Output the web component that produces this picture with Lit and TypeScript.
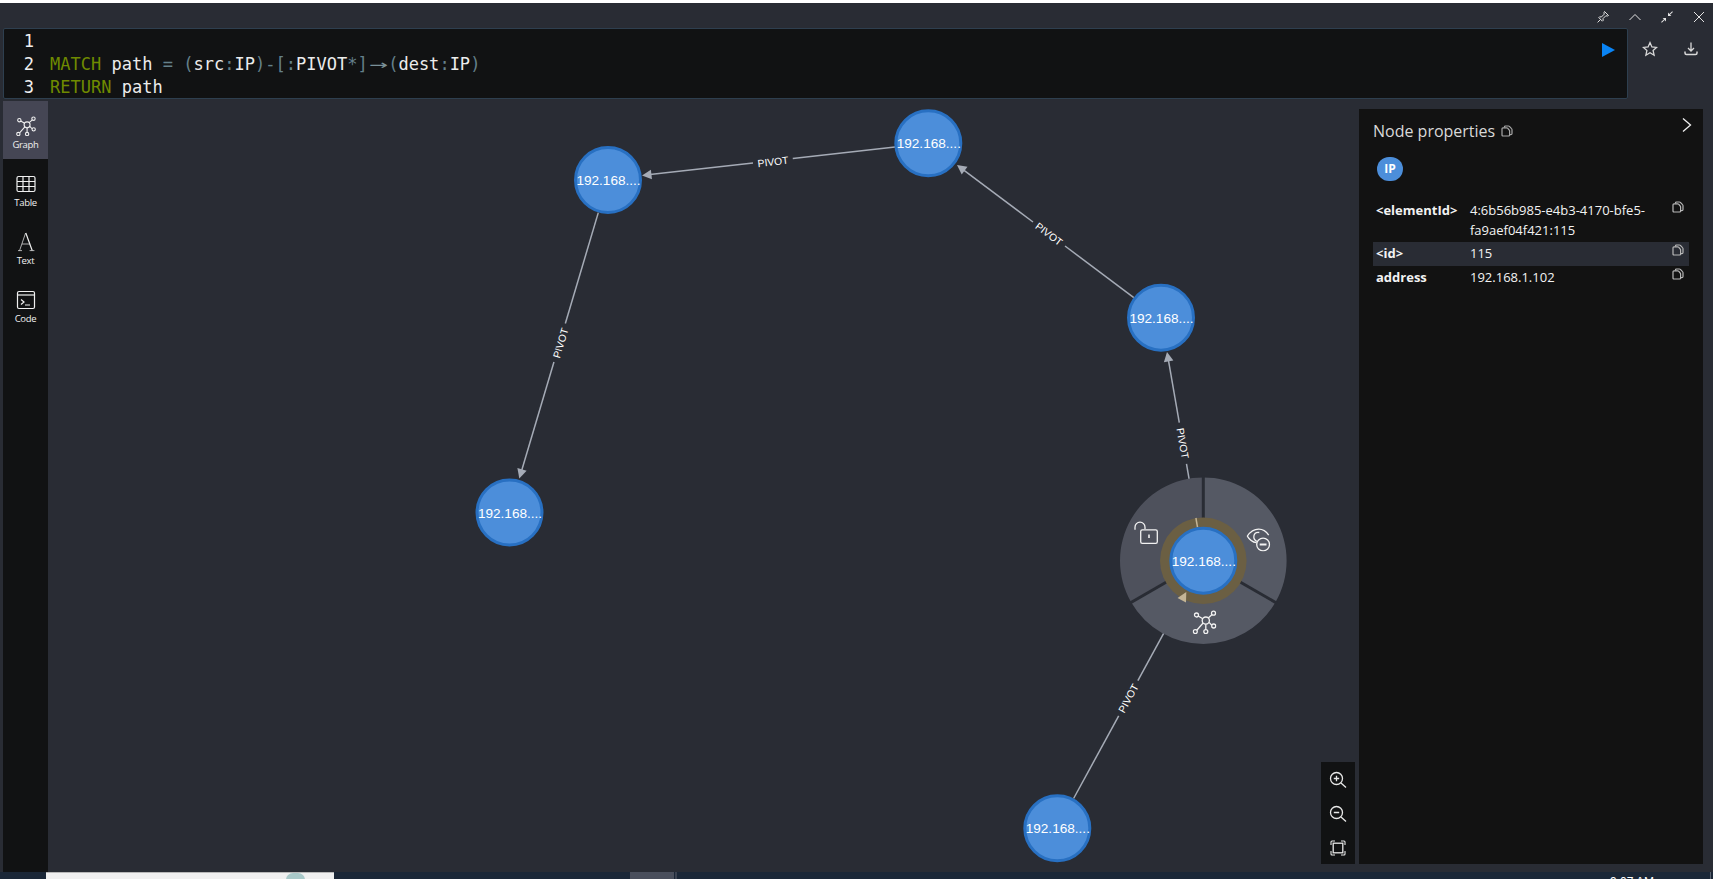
import { LitElement, html, css, svg } from "lit";
import { customElement } from "lit/decorators.js";

type Pt = [number, number];
const BG = "#292c34";
const LINE = "#a5abb6";
const BEIGE = "#c4b596";

interface Node { x: number; y: number; }
const nodes: Node[] = [
  { x: 608, y: 180 },
  { x: 928.3, y: 143.3 },
  { x: 1161, y: 317.7 },
  { x: 509.5, y: 512.5 },
  { x: 1057.3, y: 828.3 },
];
const SEL: Pt = [1203.3, 560.7];

interface Edge { from: Pt; to: Pt; label: Pt; rot: number; gap: number; arrow: boolean; }
const edges: Edge[] = [
  { from: [895, 147], to: [642, 175.5], label: [773, 161.7], rot: -6.5, gap: 20, arrow: true },
  { from: [1133.8, 297.6], to: [957, 165], label: [1049, 234], rot: 36.9, gap: 20, arrow: true },
  { from: [1203.3, 560.7], to: [1167, 352], label: [1182.7, 443.3], rot: 80.1, gap: 21, arrow: true },
  { from: [598.3, 212.6], to: [519.3, 478.5], label: [560.5, 343], rot: -73.4, gap: 20, arrow: true },
  { from: [1073.6, 798.5], to: [1186.3, 591.9], label: [1128.3, 698.3], rot: -61.4, gap: 20, arrow: false },
];

function arrowHead(tip: Pt, ux: number, uy: number, fill: string) {
  const len = 9.5, w = 4.8;
  const bx = tip[0] - ux * len, by = tip[1] - uy * len;
  const pts = `${tip[0]},${tip[1]} ${bx - uy * w},${by + ux * w} ${bx + uy * w},${by - ux * w}`;
  return svg`<polygon points=${pts} fill=${fill}></polygon>`;
}

function edgeView(e: Edge) {
  const dx = e.to[0] - e.from[0], dy = e.to[1] - e.from[1];
  const d = Math.hypot(dx, dy), ux = dx / d, uy = dy / d;
  const t = Math.max(0, (e.label[0] - e.from[0]) * ux + (e.label[1] - e.from[1]) * uy);
  const p1: Pt = [e.from[0] + ux * (t - e.gap), e.from[1] + uy * (t - e.gap)];
  const p2: Pt = [e.from[0] + ux * (t + e.gap), e.from[1] + uy * (t + e.gap)];
  const end: Pt = e.arrow ? [e.to[0] - ux * 8, e.to[1] - uy * 8] : e.to;
  return svg`
    <line x1=${e.from[0]} y1=${e.from[1]} x2=${p1[0]} y2=${p1[1]} stroke=${LINE} stroke-width="1.5"></line>
    <line x1=${p2[0]} y1=${p2[1]} x2=${end[0]} y2=${end[1]} stroke=${LINE} stroke-width="1.5"></line>
    ${e.arrow ? arrowHead(e.to, ux, uy, LINE) : null}
    <text class="edge-label" transform="translate(${e.label[0]} ${e.label[1]}) rotate(${e.rot})" text-anchor="middle" dy="3.7">PIVOT</text>`;
}

function nodeView(x: number, y: number) {
  return svg`
    <circle cx=${x} cy=${y} r="32.5" fill="#4c8eda" stroke="#2870c2" stroke-width="3"></circle>
    <text class="node-label" x=${x + 0.5} y=${y + 5} text-anchor="middle">192.168....</text>`;
}

function wedge(a0: number, a1: number, fill: string) {
  const R = 83.3, r = 40;
  const rad = (a: number) => (a * Math.PI) / 180;
  const [cx, cy] = SEL;
  const p = (rr: number, a: number) => `${cx + rr * Math.cos(rad(a))} ${cy + rr * Math.sin(rad(a))}`;
  return svg`<path d="M${p(r, a0)} L${p(R, a0)} A${R} ${R} 0 0 1 ${p(R, a1)} L${p(r, a1)} A${r} ${r} 0 0 0 ${p(r, a0)}Z" fill=${fill}></path>`;
}

function spoke(a: number) {
  const rad = (a * Math.PI) / 180;
  const [cx, cy] = SEL;
  return svg`<line x1=${cx + 40 * Math.cos(rad)} y1=${cy + 40 * Math.sin(rad)} x2=${cx + 85 * Math.cos(rad)} y2=${cy + 85 * Math.sin(rad)} stroke=${BG} stroke-width="3"></line>`;
}

const graphGlyph = svg`
  <g fill="none" stroke="currentColor" stroke-width="1.3">
    <circle cx="13.3" cy="10.6" r="3.6"></circle>
    <circle cx="4" cy="5" r="2"></circle>
    <circle cx="21" cy="3.2" r="2"></circle>
    <circle cx="21.2" cy="16" r="2"></circle>
    <circle cx="13.3" cy="21.6" r="2"></circle>
    <circle cx="2.8" cy="21.6" r="2"></circle>
    <path d="M5.7 6 L10.3 8.8 M19.6 4.6 L15.8 8 M19.3 15.3 L16.6 12.4 M13.3 14.2 V19.6 M4.3 20.2 L10.6 13"></path>
  </g>`;

const lockGlyph = svg`
  <g fill="none" stroke="currentColor" stroke-width="1.3">
    <rect x="6.7" y="8.8" width="16.6" height="13.6" rx="1.6"></rect>
    <path d="M15 13.6 V17" stroke-width="1.6"></path>
    <path d="M1 8.8 V6.2 a5 5 0 0 1 10 0 V8"></path>
  </g>`;

const eyeGlyph = svg`
  <g fill="none" stroke="currentColor" stroke-width="1.3">
    <path d="M10 15.2 C6 14.6 2.8 12 .8 8.6 C4 3.8 8 1.6 12.2 1.6 C16 1.6 19.6 3.6 22.2 7.6"></path>
    <path d="M11.2 14.2 C8.4 13.2 7 10.8 7.4 8.4 C7.9 5.8 10.2 4.6 12.8 5"></path>
    <circle cx="16.6" cy="17" r="6.4"></circle>
    <path d="M13.2 17 H20" stroke-width="2"></path>
  </g>`;

const copyGlyph = html`<svg class="copy" viewBox="0 0 12 12">
  <path d="M3.5 2.4 V2 Q3.5 1 4.5 1 H7.4 Q8 1 8.4 1.4 L10.5 3.6 Q11 4 11 4.8 V8.5 Q11 9.6 9.8 9.6 H8.6" fill="none" stroke="currentColor" stroke-width="1.2"></path>
  <path d="M2 2.8 H5.6 Q6.2 2.8 6.6 3.2 L8.2 5 Q8.6 5.4 8.6 6 V10 Q8.6 11 7.6 11 H2 Q1 11 1 10 V3.8 Q1 2.8 2 2.8 Z" fill="none" stroke="currentColor" stroke-width="1.2"></path>
</svg>`;

@customElement("app-root")
export class AppRoot extends LitElement {
  static styles = css`
    :host { display: block; width: 1713px; height: 879px; overflow: hidden; background: #292c34; font-family: "Open Sans", "Liberation Sans", sans-serif; color: #f2f2f2; }
    .app { display: flex; flex-direction: column; height: 879px; }
    .strip { height: 3px; background: #fff; flex: none; }
    .win { flex: 1; min-height: 0; display: flex; flex-direction: column; background: #292c34; }
    .controls { height: 25px; flex: none; display: flex; justify-content: flex-end; gap: 16px; padding: 6px 6px 0 0; box-sizing: border-box; color: #e4e4e4; }
    .controls svg { width: 16px; height: 16px; }
    .editor-row { height: 71px; flex: none; display: flex; padding-left: 3px; }
    .editor { width: 1625px; box-sizing: border-box; height: 71px; padding-top: 1px; background: #111213; border: 1px solid #2e3f4f; border-radius: 2px; position: relative; font: 17.03px/23px "DejaVu Sans Mono", "Liberation Mono", monospace; }
    .cm-line { display: flex; height: 23px; line-height: 23px; white-space: pre; }
    .cm-line.last { height: 22px; }
    .num { width: 30px; text-align: right; color: #f0f0f0; flex: none; }
    .code { margin-left: 16px; color: #ececec; }
    .kw { color: #6f8a00; }
    .pu { color: #64808a; }
    .arrow { display: inline-block; width: 2ch; text-align: center; color: #7a9098; transform: scaleX(1.8); }
    .play { position: absolute; right: 12px; top: 14px; width: 13px; height: 14px; }
    .actions { display: flex; gap: 25px; padding: 13px 0 0 14px; color: #d9d9d9; }
    .actions svg { width: 16px; height: 16px; }
    .main { flex: 1; min-height: 0; position: relative; display: flex; }
    .graph { position: absolute; inset: 0; width: 100%; height: 100%; }
    .edge-label { font: 10.3px "Liberation Sans", Arial, sans-serif; fill: #fff; }
    .node-label { font: 13.6px "Liberation Sans", Arial, sans-serif; fill: #fff; }
    .side { position: relative; flex: none; width: 45px; margin: 2px 0 0 3px; background: #111213; display: flex; flex-direction: column; }
    .tab { height: 58px; box-sizing: border-box; padding-top: 15px; display: flex; flex-direction: column; align-items: center; color: #f0f0f0; }
    .tab.active { background: #454654; }
    .tab svg { width: 20px; height: 20px; display: block; }
    .tab span { margin-top: 3px; font: 500 9.5px/12px "Open Sans", sans-serif; letter-spacing: -0.3px; }
    .spacer { flex: 1; }
    .zoom { position: relative; flex: none; width: 34px; height: 102px; align-self: flex-end; margin: 0 4px 8px 0; background: #111213; display: flex; flex-direction: column; align-items: center; padding-top: 7.5px; box-sizing: border-box; gap: 14px; color: #e8e8e8; }
    .zoom svg { width: 20px; height: 20px; flex: none; }
    .panel { position: relative; flex: none; width: 344px; margin: 10px 10px 8px 0; box-sizing: border-box; background: #121212; padding: 10px 14px 0; font-size: 13px; line-height: 20px; }
    .head { display: flex; align-items: flex-start; }
    .title { font-size: 16px; line-height: 24px; color: #d9d9d9; display: flex; align-items: center; gap: 6px; flex: 1; }
    .title .copy { color: #a8a8a8; }
    .chev { width: 10px; height: 16px; margin: -2px -3px 0 0; color: #f0f0f0; }
    .badge { width: 26px; height: 24px; margin: 14px 0 18px 4px; border-radius: 12px; background: #4c8eda; color: #fff; font-weight: 700; font-size: 12px; line-height: 24px; text-align: center; }
    .row { display: grid; grid-template-columns: 94px 1fr 12px; padding: 1px 5px 3px 3px; width: 316px; box-sizing: border-box; }
    .row.first { padding-bottom: 2px; }
    .row.hl { background: #292c34; }
    .key { font-weight: 700; }
    .val { padding-right: 4px; }
    .copy { width: 12px; height: 12px; color: #b8b8b8; flex: none; display: block; }
    .row .copy { margin-top: 1px; }
    .task { height: 7px; flex: none; overflow: hidden; background: #1b2737; display: flex; padding-left: 46px; font: 12px/14px "Liberation Sans", sans-serif; color: #fff; }
    .thumb { width: 288px; box-sizing: border-box; background: #f0f0f0; border-top: 1px solid #b8b8b8; display: flex; justify-content: flex-end; padding-right: 29px; }
    .smudge { width: 19px; height: 7px; background: #a9c9c9; border-radius: 9px 9px 0 0; }
    .cell { width: 44px; margin-left: 296px; background: #4a4f5c; }
    .tick { width: 2px; margin-left: 1px; background: #3b4250; }
    .clock { margin-left: 933px; padding-top: 3px; width: 100px; }
    .edge { width: 1px; background: #5a6472; }
  `;

  render() {
    return html`<div class="app">
      <div class="strip"></div>
      <div class="win">
        <div class="controls">
          <svg viewBox="0 0 16 16" fill="none" stroke="currentColor" stroke-width="1"><path d="M9.5 2.5 L13.5 6.5 L12.5 7 L10.8 6.8 L8 9.6 L8.2 11.4 L7.4 12.2 L3.8 8.6 L4.6 7.8 L6.4 8 L9.2 5.2 L9 3.5 Z M5.6 10.4 L2.6 13.4"></path></svg>
          <svg viewBox="0 0 16 16" fill="none" stroke="currentColor" stroke-width="1"><path d="M2.5 11 L8 5.5 L13.5 11"></path></svg>
          <svg viewBox="0 0 16 16" fill="currentColor"><path d="M9 7 V3.6 L10.4 5 L13.2 2.2 L13.9 2.9 L11 5.7 L12.4 7 Z M7 9 V12.4 L5.6 11 L2.8 13.8 L2.1 13.1 L5 10.3 L3.6 9 Z"></path></svg>
          <svg viewBox="0 0 16 16" fill="none" stroke="currentColor" stroke-width="1"><path d="M3 3 L13 13 M13 3 L3 13"></path></svg>
        </div>
        <div class="editor-row">
          <div class="editor">
            <div class="cm-line"><span class="num">1</span></div>
            <div class="cm-line"><span class="num">2</span><span class="code"><span class="kw">MATCH</span> path <span class="pu">=</span> <span class="pu">(</span>src<span class="pu">:</span>IP<span class="pu">)-[:</span>PIVOT<span class="pu">*]</span><span class="arrow">→</span><span class="pu">(</span>dest<span class="pu">:</span>IP<span class="pu">)</span></span></div>
            <div class="cm-line last"><span class="num">3</span><span class="code"><span class="kw">RETURN</span> path</span></div>
            <svg class="play" viewBox="0 0 13 14"><path d="M0 0 L13 7 L0 14 Z" fill="#0a84f5"></path></svg>
          </div>
          <div class="actions">
            <svg viewBox="0 0 16 16" fill="none" stroke="currentColor" stroke-width="1.3"><path d="M8 1.6 L9.9 5.9 L14.6 6.4 L11.1 9.5 L12.1 14.2 L8 11.8 L3.9 14.2 L4.9 9.5 L1.4 6.4 L6.1 5.9 Z"></path></svg>
            <svg viewBox="0 0 16 16" fill="none" stroke="currentColor" stroke-width="1.3"><path d="M8 1.5 V9.5 M5 7 L8 10 L11 7"></path><path d="M2 10.5 V12 Q2 13.5 3.5 13.5 H12.5 Q14 13.5 14 12 V10.5" stroke-width="1.5"></path></svg>
          </div>
        </div>
        <div class="main">
          <svg class="graph" viewBox="0 99 1713 773">
            ${edges.map(edgeView)}
            ${wedge(-90, 30, "#555964")}
            ${wedge(30, 150, "#555964")}
            ${wedge(150, 270, "#4e515c")}
            ${spoke(-90)}${spoke(30)}${spoke(150)}
            <circle cx=${SEL[0]} cy=${SEL[1]} r="43.3" fill="#6b5f43"></circle>
            <line x1="1197.5" y1="527.2" x2="1195.9" y2="518" stroke=${BEIGE} stroke-width="1.5"></line>
            ${arrowHead([1186.3, 591.9], 0.479, -0.878, BEIGE)}
            ${nodes.map((n) => nodeView(n.x, n.y))}
            ${nodeView(SEL[0], SEL[1])}
            <g color="#f2f2f2">
              <svg x="1134" y="521" width="24" height="24" viewBox="0 0 24 24">${lockGlyph}</svg>
              <svg x="1246.5" y="527.5" width="24" height="24" viewBox="0 0 24 24">${eyeGlyph}</svg>
              <svg x="1192.5" y="610" width="24" height="24" viewBox="0 0 24 24">${graphGlyph}</svg>
            </g>
          </svg>
          <nav class="side">
            <div class="tab active"><svg viewBox="0 0 24 24">${graphGlyph}</svg><span>Graph</span></div>
            <div class="tab"><svg viewBox="0 0 20 20" fill="none" stroke="currentColor" stroke-width="1.2"><rect x="1" y="2.5" width="18" height="15" rx="1.5"></rect><path d="M1 7.5 H19 M1 12.5 H19 M7 2.5 V17.5 M13 2.5 V17.5"></path></svg><span>Table</span></div>
            <div class="tab"><svg viewBox="0 0 20 20" stroke="currentColor" fill="none"><line x1="9.6" y1="1" x2="3.6" y2="18.5" stroke-width="0.7"></line><line x1="9.8" y1="1" x2="16.2" y2="18.5" stroke-width="1.2"></line><line x1="6" y1="12" x2="14" y2="12" stroke-width="0.7"></line><line x1="2" y1="18.6" x2="6" y2="18.6" stroke-width="0.7"></line><line x1="13.6" y1="18.6" x2="18.4" y2="18.6" stroke-width="0.7"></line></svg><span>Text</span></div>
            <div class="tab"><svg viewBox="0 0 20 20" fill="none" stroke="currentColor" stroke-width="1.2"><rect x="1.5" y="1.5" width="17" height="17" rx="1.5"></rect><path d="M1.5 5 H18.5"></path><path d="M5 9.5 L8 12 L5 14.5 M9 15 H14"></path></svg><span>Code</span></div>
          </nav>
          <div class="spacer"></div>
          <div class="zoom">
            <svg viewBox="0 0 20 20" fill="none" stroke="currentColor" stroke-width="1.3"><circle cx="8.5" cy="8.5" r="6"></circle><path d="M13 13 L18 17.5 M5.8 8.5 H11.2 M8.5 5.8 V11.2"></path></svg>
            <svg viewBox="0 0 20 20" fill="none" stroke="currentColor" stroke-width="1.3"><circle cx="8.5" cy="8.5" r="6"></circle><path d="M13 13 L18 17.5 M5.8 8.5 H11.2"></path></svg>
            <svg viewBox="0 0 20 20" fill="none" stroke="currentColor" stroke-width="1.1"><rect x="5.2" y="5.2" width="9.6" height="9.6" stroke-width="1.3"></rect><path d="M3 7 V4 Q3 3 4 3 H7 M13 3 H16 Q17 3 17 4 V7 M17 13 V16 Q17 17 16 17 H13 M7 17 H4 Q3 17 3 16 V13"></path></svg>
          </div>
          <aside class="panel">
            <div class="head">
              <div class="title">Node properties ${copyGlyph}</div>
              <svg class="chev" viewBox="0 0 10 16" fill="none" stroke="currentColor" stroke-width="1.3"><path d="M1 1.5 L8.5 8 L1 14.5"></path></svg>
            </div>
            <div class="badge">IP</div>
            <div class="row first"><span class="key">&lt;elementId&gt;</span><span class="val">4:6b56b985-e4b3-4170-bfe5-fa9aef04f421:115</span>${copyGlyph}</div>
            <div class="row hl"><span class="key">&lt;id&gt;</span><span class="val">115</span>${copyGlyph}</div>
            <div class="row"><span class="key">address</span><span class="val">192.168.1.102</span>${copyGlyph}</div>
          </aside>
        </div>
      </div>
      <div class="task">
        <div class="thumb"><div class="smudge"></div></div>
        <div class="cell"></div>
        <div class="tick"></div>
        <div class="clock">9:07 AM</div>
        <div class="edge"></div>
      </div>
    </div>`;
  }
}
